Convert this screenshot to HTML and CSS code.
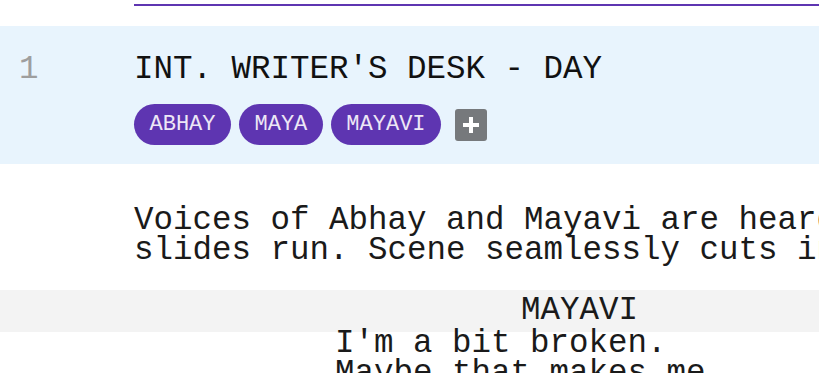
FILE: index.html
```html
<!DOCTYPE html>
<html lang="en">
<head>
    <meta charset="UTF-8">
    <meta name="viewport" content="width=device-width, initial-scale=1.0">
    <title>Script Editor</title>
    <link rel="stylesheet" href="styles.css">
</head>
<body>
    <div class="title-rule"></div>

    <div class="scene">
        <div class="scene-number">1</div>
        <div class="scene-body">
            <div class="scene-heading">INT. WRITER'S DESK - DAY</div>
            <div class="cast">
                <span class="pill">ABHAY</span>
                <span class="pill">MAYA</span>
                <span class="pill">MAYAVI</span>
                <button class="add-cast" title="Add character">
                    <svg width="18" height="18" viewBox="0 0 18 18">
                        <path d="M9 1v16M1 9h16" stroke="#fff" stroke-width="4" fill="none"/>
                    </svg>
                </button>
            </div>
        </div>
    </div>

    <div class="action">Voices of Abhay and Mayavi are heard as the presentation slides run. Scene seamlessly cuts into the writer's room.</div>

    <div class="character">MAYAVI</div>
    <div class="dialogue">I'm a bit broken.<br>Maybe that makes me<br>a little more real.</div>
</body>
</html>
```

FILE: styles.css
```css
body {
    margin: 0;
    font-family: "Liberation Mono", monospace;
    color: #1a1a1a;
    background: #fff;
    overflow: hidden;
}
.title-rule {
    margin: 4px 0 0 134px;
    border-top: 2px solid #5e35b1;
}
.scene {
    margin-top: 20px;
    background: #e8f4fd;
    display: grid;
    grid-template-columns: 134px 1fr;
    padding: 29px 0 19px;
}
.scene-number {
    padding-left: 19px;
    font-size: 32.5px;
    line-height: 30px;
    color: #9e9e9e;
}
.scene-heading {
    font-size: 32.5px;
    line-height: 30px;
    color: #111;
    white-space: nowrap;
}
.cast {
    display: flex;
    align-items: center;
    gap: 8px;
    margin-top: 19px;
}
.pill {
    background: #5e35b1;
    color: #ede7f6;
    font-size: 22px;
    line-height: 41px;
    padding: 0 15.5px;
    border-radius: 21px;
}
.add-cast {
    margin-left: 6px;
    width: 32px;
    height: 32px;
    padding: 0;
    border: none;
    border-radius: 3px;
    background: #76797c;
    display: flex;
    align-items: center;
    justify-content: center;
    cursor: pointer;
}
.action {
    margin: 42px 0 0 134px;
    width: 60ch;
    font-size: 32.5px;
    line-height: 30px;
}
.character {
    margin-top: 24px;
    background: #f3f3f3;
    padding: 3px 0 3px 521px;
    margin-bottom: -3px;
    font-size: 32.5px;
    line-height: 36px;
}
.dialogue {
    margin-left: 335px;
    font-size: 32.5px;
    line-height: 30px;
}
```
